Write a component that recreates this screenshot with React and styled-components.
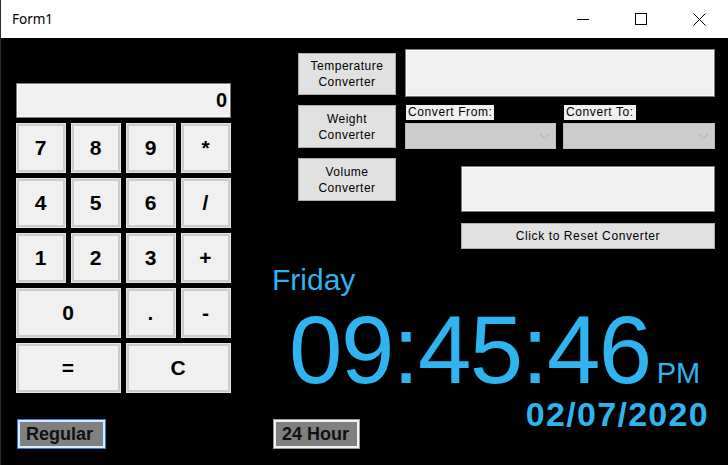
import React from "react";
import styled, { createGlobalStyle } from "styled-components";

const GlobalStyle = createGlobalStyle`
  html, body {
    margin: 0;
    padding: 0;
    background: #000;
  }
  * {
    box-sizing: border-box;
  }
`;

const BLUE = "#2fb4ef";

const Window = styled.div`
  width: 728px;
  height: 465px;
  display: flex;
  flex-direction: column;
  border-left: 1px solid #2c2c2c;
  overflow: hidden;
  font-family: "Liberation Sans", Arial, sans-serif;
`;

const TitleBar = styled.div`
  height: 38px;
  flex: none;
  background: #fff;
  display: flex;
  align-items: center;
`;

const Title = styled.span`
  flex: 1;
  padding-left: 11px;
  font-family: "Noto Sans", sans-serif;
  font-size: 13.5px;
  color: #000;
`;

const Control = styled.div`
  width: 58px;
  height: 38px;
  display: flex;
  align-items: center;
  justify-content: center;
`;

const Body = styled.div`
  flex: 1;
  background: #000;
  display: flex;
`;

const LeftColumn = styled.div`
  width: 271px;
  display: flex;
  flex-direction: column;
  padding: 45px 0 16px 15px;
`;

const Display = styled.div`
  width: 215px;
  height: 35px;
  margin-bottom: 5px;
  background: #f0f0f0;
  border: 1px solid #7a7a7a;
  box-shadow: inset 0 0 0 1px #fbfbfb;
  display: flex;
  align-items: center;
  justify-content: flex-end;
  padding-right: 3px;
  font-weight: bold;
  font-size: 20px;
  color: #000;
`;

const Keypad = styled.div`
  display: grid;
  grid-template-columns: repeat(4, 50px);
  grid-auto-rows: 50px;
  gap: 5px;
`;

const Key = styled.div`
  grid-column: span ${(p) => p.$span || 1};
  background: #f0f0f0;
  border: 1px solid #e4e4e4;
  box-shadow: inset 0 0 0 2px #cbcbcb;
  display: flex;
  align-items: center;
  justify-content: center;
  padding-right: 1px;
  font-weight: bold;
  font-size: 21px;
  color: #000;
`;

const ModeButton = styled.div`
  margin-top: auto;
  margin-left: ${(p) => p.$offset || 0}px;
  width: ${(p) => p.$width}px;
  height: 30px;
  background: #808080;
  border: 1px solid ${(p) => (p.$active ? "#2a7fd4" : "#9a9a9a")};
  box-shadow: inset 0 0 0 2px ${(p) => (p.$active ? "#d6ebfb" : "#f2f2f2")};
  display: flex;
  align-items: center;
  padding-left: 8px;
  font-weight: bold;
  font-size: 18px;
  color: #111;
`;

const RightColumn = styled.div`
  flex: 1;
  display: flex;
  flex-direction: column;
  padding: 11px 13px 16px 0;
`;

const Converter = styled.div`
  display: flex;
  gap: 9px;
  margin-left: 26px;
`;

const ConvButtons = styled.div`
  width: 98px;
  display: flex;
  flex-direction: column;
  gap: 10px;
  padding-top: 4px;
`;

const ConvButton = styled.div`
  height: ${(p) => p.$h || 43}px;
  background: #e1e1e1;
  border: 1px solid #adadad;
  display: flex;
  align-items: center;
  justify-content: center;
  text-align: center;
  font-size: 12px;
  line-height: 16px;
  letter-spacing: 0.5px;
  color: #000;
`;

const Fields = styled.div`
  width: 310px;
  display: flex;
  flex-direction: column;
`;

const TextBox = styled.div`
  height: ${(p) => p.$h}px;
  background: #f0f0f0;
  border: 1px solid #7a7a7a;
  box-shadow: inset 0 0 0 1px #fafafa;
`;

const ComboRow = styled.div`
  display: flex;
  gap: 7px;
  margin-top: 8px;
`;

const ComboGroup = styled.div`
  width: ${(p) => p.$w}px;
  display: flex;
  flex-direction: column;
  gap: 3px;
`;

const Label = styled.span`
  align-self: flex-start;
  height: 15px;
  margin-left: 1px;
  padding: 0 2px;
  background: #f0f0f0;
  font-size: 12px;
  line-height: 15px;
  letter-spacing: 0.6px;
  color: #000;
`;

const Combo = styled.div`
  height: 26px;
  background: #cccccc;
  border: 1px solid #bdbdbd;
  display: flex;
  align-items: center;
  justify-content: flex-end;
  padding-right: 5px;
`;

const Lower = styled.div`
  margin: 17px 0 0 56px;
  display: flex;
  flex-direction: column;
  gap: 11px;
`;

const ResetButton = styled.div`
  height: 26px;
  background: #e1e1e1;
  border: 1px solid #adadad;
  display: flex;
  align-items: center;
  justify-content: center;
  font-size: 12px;
  letter-spacing: 0.6px;
  color: #000;
`;

const Day = styled.div`
  margin-top: 14px;
  font-size: 30px;
  line-height: 34px;
  color: ${BLUE};
`;

const TimeRow = styled.div`
  display: flex;
  align-items: baseline;
  margin: 13px 0 0 17px;
  color: ${BLUE};
`;

const Time = styled.span`
  font-size: 96px;
  line-height: 80px;
  letter-spacing: -1.5px;
`;

const Meridiem = styled.span`
  margin-left: 6px;
  font-size: 29px;
  line-height: 29px;
`;

const BottomRow = styled.div`
  flex: 1;
  display: flex;
  justify-content: space-between;
  align-items: flex-end;
`;

const DateText = styled.span`
  margin: 0 6px 20px 0;
  font-weight: bold;
  font-size: 34px;
  line-height: 30px;
  letter-spacing: 1.3px;
  color: ${BLUE};
`;

const Chevron = () => (
  <svg width="11" height="7" viewBox="0 0 11 7">
    <path d="M0.5 0.5 L5.5 5.5 L10.5 0.5" fill="none" stroke="#a9a9a9" strokeWidth="1" />
  </svg>
);

const keys = [
  ["7"], ["8"], ["9"], ["*"],
  ["4"], ["5"], ["6"], ["/"],
  ["1"], ["2"], ["3"], ["+"],
  ["0", 2], ["."], ["-"],
  ["=", 2], ["C", 2],
];

export default function App() {
  return (
    <>
      <GlobalStyle />
      <Window>
        <TitleBar>
          <Title>Form1</Title>
          <Control>
            <svg width="12" height="12" viewBox="0 0 12 12">
              <path d="M0 6.5 H12" stroke="#000" strokeWidth="1" />
            </svg>
          </Control>
          <Control>
            <svg width="12" height="12" viewBox="0 0 12 12">
              <rect x="0.5" y="0.5" width="11" height="11" fill="none" stroke="#000" strokeWidth="1" />
            </svg>
          </Control>
          <Control>
            <svg width="13" height="13" viewBox="0 0 13 13">
              <path d="M0.5 0.5 L12.5 12.5 M12.5 0.5 L0.5 12.5" stroke="#000" strokeWidth="1" />
            </svg>
          </Control>
        </TitleBar>
        <Body>
          <LeftColumn>
            <Display>0</Display>
            <Keypad>
              {keys.map(([label, span], i) => (
                <Key key={i} $span={span}>
                  {label}
                </Key>
              ))}
            </Keypad>
            <ModeButton $active $width={89} $offset={1}>
              Regular
            </ModeButton>
          </LeftColumn>
          <RightColumn>
            <Converter>
              <ConvButtons>
                <ConvButton $h={42}>
                  Temperature
                  <br />
                  Converter
                </ConvButton>
                <ConvButton>
                  Weight
                  <br />
                  Converter
                </ConvButton>
                <ConvButton>
                  Volume
                  <br />
                  Converter
                </ConvButton>
              </ConvButtons>
              <Fields>
                <TextBox $h={48} />
                <ComboRow>
                  <ComboGroup $w={151}>
                    <Label>Convert From:</Label>
                    <Combo>
                      <Chevron />
                    </Combo>
                  </ComboGroup>
                  <ComboGroup $w={152}>
                    <Label>Convert To:</Label>
                    <Combo>
                      <Chevron />
                    </Combo>
                  </ComboGroup>
                </ComboRow>
                <Lower>
                  <TextBox $h={46} />
                  <ResetButton>Click to Reset Converter</ResetButton>
                </Lower>
              </Fields>
            </Converter>
            <Day>Friday</Day>
            <TimeRow>
              <Time>09:45:46</Time>
              <Meridiem>PM</Meridiem>
            </TimeRow>
            <BottomRow>
              <ModeButton $width={87} $offset={1}>
                24 Hour
              </ModeButton>
              <DateText>02/07/2020</DateText>
            </BottomRow>
          </RightColumn>
        </Body>
      </Window>
    </>
  );
}
